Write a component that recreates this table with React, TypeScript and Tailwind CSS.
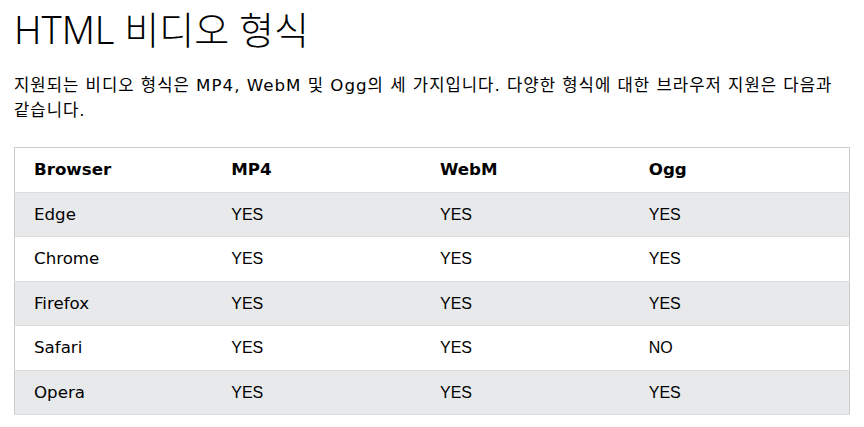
import React from 'react';

const rows = [
  ['Edge', 'YES', 'YES', 'YES'],
  ['Chrome', 'YES', 'YES', 'YES'],
  ['Firefox', 'YES', 'YES', 'YES'],
  ['Safari', 'YES', 'YES', 'NO'],
  ['Opera', 'YES', 'YES', 'YES'],
];

const bodyFont = "font-['DejaVu_Sans','Noto_Sans_CJK_KR',sans-serif]";
const yesFont = "font-['Liberation_Sans',sans-serif] text-[16px]";

export default function App() {
  return (
    <div className="min-h-screen bg-white px-[14px] pt-[5px] text-black">
      <h1 className="font-['Noto_Sans','Noto_Sans_CJK_KR',sans-serif] text-[38px] font-light leading-[48px]">
        HTML 비디오 형식
      </h1>

      <p className={`mt-[20px] text-[16.67px] leading-[25px] tracking-[1px] ${bodyFont}`}>
        지원되는 비디오 형식은 MP4, WebM 및 Ogg의 세 가지입니다. 다양한 형식에 대한 브라우저 지원은 다음과
        <br />
        같습니다.
      </p>

      <table className={`mt-[24px] w-full border-collapse border border-[#ccc] text-[16.67px] ${bodyFont}`}>
        <thead>
          <tr className="border-b border-[#ddd] bg-white">
            <th className="w-1/4 py-[10px] pl-[19px] text-left font-bold leading-[23.5px]">Browser</th>
            <th className="w-1/4 py-[10px] pl-[8px] text-left font-bold leading-[23.5px]">MP4</th>
            <th className="w-1/4 py-[10px] pl-[8px] text-left font-bold leading-[23.5px]">WebM</th>
            <th className="w-1/4 py-[10px] pl-[8px] text-left font-bold leading-[23.5px]">Ogg</th>
          </tr>
        </thead>
        <tbody>
          {rows.map((r, i) => (
            <tr key={r[0]} className={i % 2 === 0 ? 'border-b border-[#ddd] bg-[#e7e9eb]' : 'border-b border-[#ddd] bg-white'}>
              <td className="py-[10px] pl-[19px] leading-[23.5px]">{r[0]}</td>
              <td className={`py-[10px] pl-[8px] leading-[23.5px] ${yesFont}`}>{r[1]}</td>
              <td className={`py-[10px] pl-[8px] leading-[23.5px] ${yesFont}`}>{r[2]}</td>
              <td className={`py-[10px] pl-[8px] leading-[23.5px] ${yesFont}`}>{r[3]}</td>
            </tr>
          ))}
        </tbody>
      </table>
    </div>
  );
}
